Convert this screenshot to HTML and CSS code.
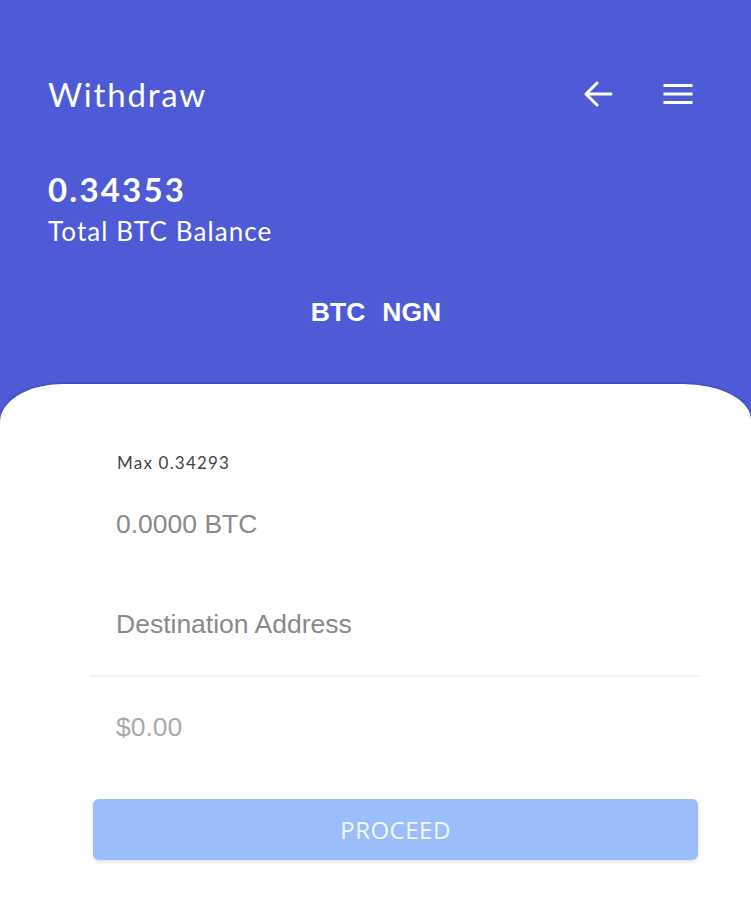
FILE: index.html
```html
<!DOCTYPE html>
<html lang="en">
<head>
    <meta charset="UTF-8">
    <meta name="viewport" content="width=device-width, initial-scale=1.0">
    <title>Withdraw</title>
    <link rel="stylesheet" href="styles.css">
</head>
<body>
    <div id="app">
        <!-- Header -->
        <header class="top">
            <div class="title-row">
                <h1>Withdraw</h1>
                <div class="actions">
                    <svg class="icon" width="30" height="26" viewBox="0 0 30 26">
                        <path d="M28 13H4M14 2L3 13l11 11" fill="none" stroke="#fff" stroke-width="3" stroke-linecap="round" stroke-linejoin="round"/>
                    </svg>
                    <svg class="icon" width="32" height="22" viewBox="0 0 32 22">
                        <path d="M1.5 2.5h29M1.5 11h29M1.5 19.5h29" fill="none" stroke="#fff" stroke-width="3"/>
                    </svg>
                </div>
            </div>

            <div class="balance">
                <div class="amount">0.34353</div>
                <div class="label">Total BTC Balance</div>
            </div>

            <div class="tabs">
                <span class="tab">BTC</span>
                <span class="tab">NGN</span>
            </div>
        </header>

        <!-- Withdraw form -->
        <main class="card">
            <form class="form">
                <div class="max">Max 0.34293</div>
                <div class="field">
                    <input type="text" placeholder="0.0000 BTC">
                </div>
                <div class="field bordered">
                    <input type="text" placeholder="Destination Address">
                </div>
                <div class="field">
                    <input type="text" class="muted" placeholder="$0.00">
                </div>
                <button type="button" class="proceed" disabled>PROCEED</button>
            </form>
        </main>
    </div>
</body>
</html>
```

FILE: styles.css
```css
/* Global */
body {
    margin: 0;
    font-family: 'Lato', 'Noto Sans', sans-serif;
    background: #4f5bd6;
    color: #fff;
}

#app {
    width: 751px;
    min-height: 900px;
    display: flex;
    flex-direction: column;
}

/* Header */
.top {
    padding: 72px 57px 0 48px;
    height: 312px;
}

.title-row {
    display: flex;
    justify-content: space-between;
    align-items: center;
    height: 44px;
}

.title-row h1 {
    margin: 0;
    font-size: 33px;
    font-weight: 400;
    letter-spacing: 1.8px;
}

.actions {
    display: flex;
    align-items: center;
    gap: 49px;
}

.actions .icon {
    display: block;
}

.balance {
    margin-top: 53px;
}

.amount {
    font-size: 33px;
    font-weight: 700;
    line-height: 40px;
    letter-spacing: 2.2px;
}

.label {
    margin-top: 6px;
    font-size: 26px;
    line-height: 32px;
    letter-spacing: 1.1px;
}

.tabs {
    margin-top: 50px;
    display: flex;
    justify-content: center;
    gap: 17px;
    padding-left: 10px;
    font-family: 'Liberation Sans', Arial, sans-serif;
    font-size: 26.5px;
    font-weight: 700;
    line-height: 30px;
}

/* Card */
.card {
    flex: 1;
    background: #fff;
    border-radius: 62px 68px 0 0 / 38px 36px 0 0;
    box-shadow: 0 -1px 2px rgba(40, 50, 160, 0.5);
}

.form {
    width: 610px;
    margin: 0 0 0 90px;
    padding-top: 68px;
}

.max {
    padding-left: 27px;
    font-size: 17px;
    line-height: 22px;
    letter-spacing: 1.2px;
    color: #444;
}

.field {
    height: 100px;
    display: flex;
    align-items: center;
}

.field.bordered {
    height: 103px;
    padding-bottom: 1px;
    border-bottom: 2px solid #f3f3f3;
    box-sizing: border-box;
}

.field input {
    width: 100%;
    border: none;
    outline: none;
    background: none;
    padding: 0 0 0 26px;
    font-family: 'Liberation Sans', Arial, sans-serif;
    font-size: 26.5px;
}

.field input::placeholder {
    color: #8a8a8a;
}

.field input.muted::placeholder {
    color: #aaa;
}

.proceed {
    display: block;
    width: 605px;
    height: 61px;
    margin: 22px 0 0 3px;
    border: none;
    border-radius: 6px;
    background: #9bbefb;
    color: rgba(255, 255, 255, 0.9);
    font-family: 'Open Sans', sans-serif;
    font-size: 24px;
    letter-spacing: 0.5px;
    box-shadow: 0 2px 4px rgba(0, 0, 0, 0.12);
}
```
